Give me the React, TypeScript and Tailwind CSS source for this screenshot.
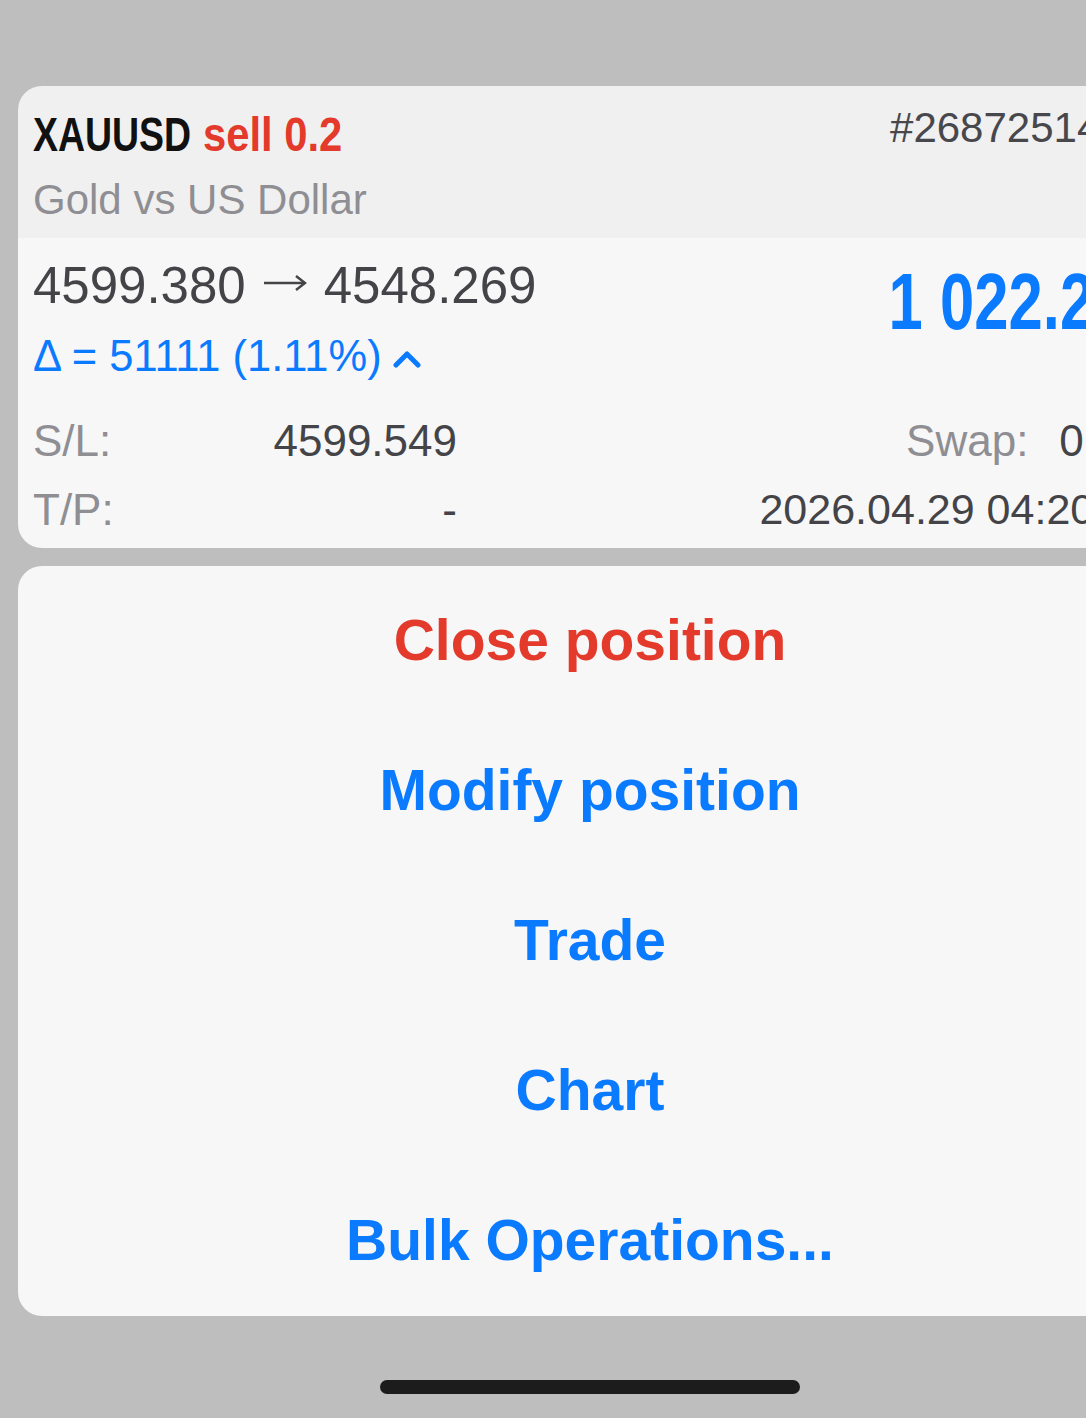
import React from "react";

const sans = { fontFamily: '"Liberation Sans", Arial, sans-serif' };

export default function App() {
  return (
    <div
      className="w-[1086px] h-[1418px] overflow-hidden bg-[#bebebe] pt-[86px] pl-[18px]"
      style={sans}
    >
      {/* Position card */}
      <div className="w-[1144px] rounded-[24px] overflow-hidden">
        <div className="bg-[#f0f0f0] h-[152px] flex justify-between px-[15px]">
          <div className="pt-[21px] flex flex-col">
            <div className="h-[56px] flex text-[48px] leading-[56px] font-bold whitespace-nowrap">
              <div className="w-[170px]">
                <span className="inline-block origin-left scale-x-[0.78] text-[#111111]">XAUUSD</span>
              </div>
              <div className="w-[200px]">
                <span className="inline-block origin-left scale-x-[0.87] text-[#e33a2c]">sell 0.2</span>
              </div>
            </div>
            <div className="mt-[12px] text-[42px] leading-[50px] text-[#8e8e93] whitespace-nowrap">
              Gold vs US Dollar
            </div>
          </div>
          <div className="pt-[17px] text-[42px] leading-[50px] text-[#48484c] whitespace-nowrap">
            #2687251443
          </div>
        </div>
        <div className="bg-[#f7f7f7] h-[310px] px-[15px] flex flex-col">
          <div className="flex justify-between">
            <div className="flex flex-col">
              <div className="pt-[18px] flex items-center text-[51px] leading-[60px] text-[#444448] whitespace-nowrap">
                <span>4599.380</span>
                <svg width="44" height="20" viewBox="0 0 44 20" className="mx-[17px] mt-[-6px]">
                  <line x1="1" y1="10" x2="42" y2="10" stroke="#444448" strokeWidth="2.4" />
                  <polyline
                    points="33,3 42,10 33,17"
                    fill="none"
                    stroke="#444448"
                    strokeWidth="2.4"
                    strokeLinejoin="miter"
                  />
                </svg>
                <span>4548.269</span>
              </div>
              <div className="mt-[15px] flex items-center text-[43.5px] leading-[50px] text-[#0a7aff] whitespace-nowrap">
                <span>Δ = 51111 (1.11%)</span>
                <svg width="28" height="20" viewBox="0 0 28 20" className="ml-[11px] mt-[6px]">
                  <polyline
                    points="3,16 14,5 25,16"
                    fill="none"
                    stroke="#0a7aff"
                    strokeWidth="5"
                    strokeLinecap="round"
                    strokeLinejoin="round"
                  />
                </svg>
              </div>
            </div>
            <div className="pt-[24px] pr-[19px] h-[104px] text-[80px] leading-[80px] font-bold text-[#0a7aff] whitespace-nowrap">
              <span className="inline-block origin-right scale-x-[0.77]">1 022.20</span>
            </div>
          </div>
          <div className="mt-[25px] flex justify-between text-[44px] leading-[69px]">
            <div className="flex flex-col w-[424px]">
              <div className="flex justify-between">
                <span className="text-[#8e8e93]">S/L:</span>
                <span className="text-[#444448]">4599.549</span>
              </div>
              <div className="flex justify-between">
                <span className="text-[#8e8e93]">T/P:</span>
                <span className="text-[#444448]">-</span>
              </div>
            </div>
            <div className="flex flex-col items-end">
              <div className="flex gap-[31px] pr-[2px]">
                <span className="text-[#8e8e93]">Swap:</span>
                <span className="text-[#444448]">0.00</span>
              </div>
              <div className="text-[43px] text-[#444448] whitespace-nowrap -mr-[7px]">
                2026.04.29 04:20:15
              </div>
            </div>
          </div>
        </div>
      </div>

      {/* Action sheet */}
      <div className="mt-[18px] w-[1144px] rounded-[24px] bg-[#f7f7f7] flex flex-col">
        {[
          { t: "Close position", c: "text-[#e33a2c]" },
          { t: "Modify position", c: "text-[#0a7aff]" },
          { t: "Trade", c: "text-[#0a7aff]" },
          { t: "Chart", c: "text-[#0a7aff]" },
          { t: "Bulk Operations...", c: "text-[#0a7aff]" },
        ].map((it) => (
          <div key={it.t} className="h-[150px] flex items-center justify-center">
            <span className={`text-[57px] font-bold ${it.c}`}>{it.t}</span>
          </div>
        ))}
      </div>

      {/* Home indicator */}
      <div className="w-[1144px] flex justify-center pt-[64px]">
        <div className="w-[420px] h-[14px] rounded-full bg-[#1c1c1c]" />
      </div>
    </div>
  );
}
